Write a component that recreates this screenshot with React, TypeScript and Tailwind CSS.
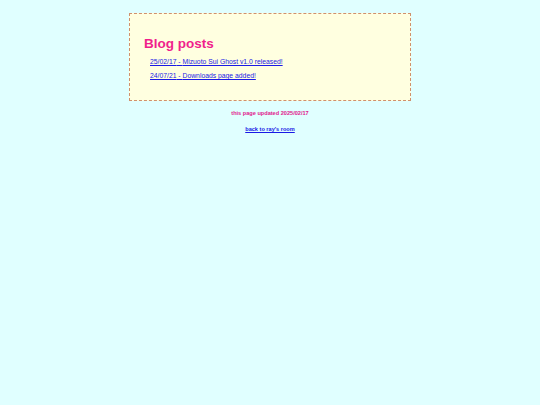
const posts = [
  { date: '25/02/17', title: 'Mizuoto Sui Ghost v1.0 released!' },
  { date: '24/07/21', title: 'Downloads page added!' },
]

const App = () => {
  return (
    <div className="min-h-[405px] w-full bg-[#e0ffff] pt-[13px] font-['Liberation_Sans',Arial,sans-serif]">
      <div className="mx-auto w-[282px] h-[88px] border border-dashed border-[#d0906c] bg-[#ffffe0] pl-[14px] pt-[21.5px]">
        <h2 className="text-[13.5px] leading-[15px] font-bold text-[#f01e8c]">Blog posts</h2>
        <ul className="mt-[4.5px] pl-[6px]">
          {posts.map((p) => (
            <li key={p.date} className="text-[6.8px] leading-[14px]">
              <a href="#" className="text-[#1a1ae6] underline decoration-[#1a1ae6]">
                {p.date} - {p.title}
              </a>
            </li>
          ))}
        </ul>
      </div>
      <div className="mt-[8px] flex flex-col items-center">
        <p className="text-[5.6px] leading-[8px] font-bold text-[#e0208c]">this page updated 2025/02/17</p>
        <a href="#" className="mt-[8px] text-[5.6px] leading-[8px] font-bold text-[#1a1ae6] underline decoration-[#1a1ae6]">
          back to ray's room
        </a>
      </div>
    </div>
  )
}

export default App
